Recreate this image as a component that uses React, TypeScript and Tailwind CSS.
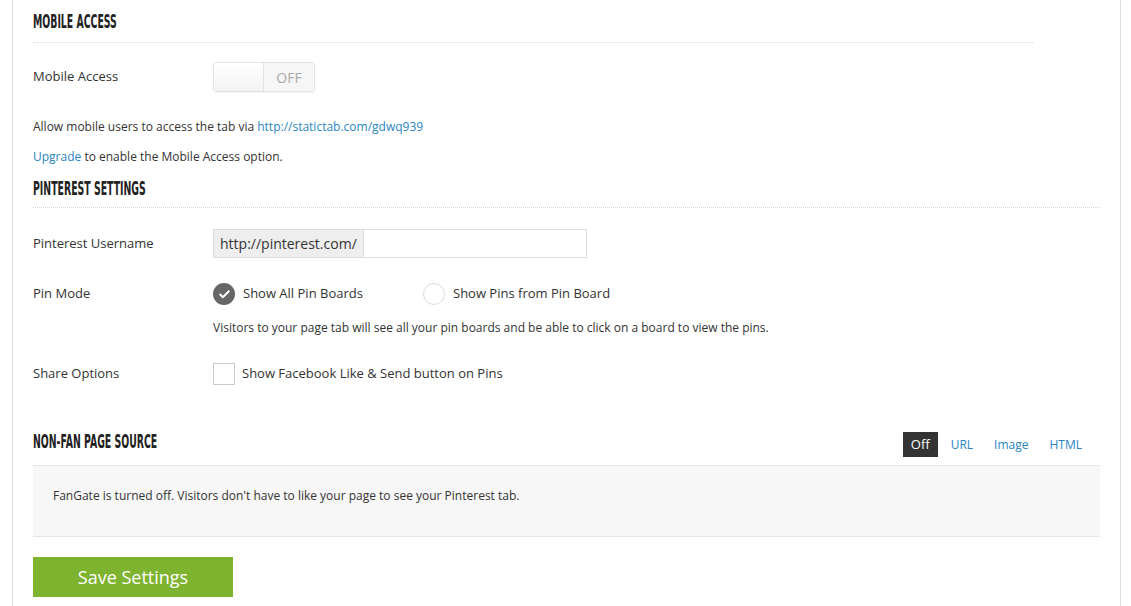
import { Check } from "lucide-react";

const heading =
  "inline-block origin-left scale-x-[0.52] whitespace-nowrap text-[20px] font-bold uppercase leading-[22px] text-[#222]";
const headingFont = {
  fontFamily: '"Liberation Sans Narrow", "DejaVu Sans Condensed", "Liberation Sans", sans-serif',
};

function SectionTitle({ children }: { children: string }) {
  return (
    <h2 className={heading} style={headingFont}>
      {children}
    </h2>
  );
}

function Row({ label, children }: { label: string; children: React.ReactNode }) {
  return (
    <div className="flex items-center">
      <div className="w-[180px] text-[13px] text-[#333]">{label}</div>
      <div className="flex items-center">{children}</div>
    </div>
  );
}

function Radio({ checked, label }: { checked?: boolean; label: string }) {
  return (
    <label className="flex items-center gap-2 text-[13px] text-[#333]">
      {checked ? (
        <span className="flex h-[22px] w-[22px] items-center justify-center rounded-full bg-[#666]">
          <Check className="h-[13px] w-[13px] text-white" strokeWidth={3.5} />
        </span>
      ) : (
        <span className="h-[22px] w-[22px] rounded-full border border-[#ddd] bg-white" />
      )}
      {label}
    </label>
  );
}

export default function App() {
  return (
    <div
      className="min-h-screen bg-white"
      style={{ fontFamily: '"Open Sans", "Liberation Sans", sans-serif' }}
    >
      <div className="ml-3 w-[1109px] min-h-[606px] border-x border-[#ddd] px-5 pb-8">
        {/* Mobile access */}
        <div className="w-[1000px] border-b border-dotted border-[#d6d6d6] pt-[10px] h-[43px]">
          <SectionTitle>Mobile Access</SectionTitle>
        </div>
        <div className="mt-[19px]">
          <Row label="Mobile Access">
            <div className="flex h-[30px] w-[102px] overflow-hidden rounded-[3px] border border-[#e3e3e3] shadow-[0_1px_1px_rgba(0,0,0,0.05)]">
              <div className="w-[50px] border-r border-[#e3e3e3] bg-gradient-to-b from-white to-[#f3f3f3]" />
              <div className="flex flex-1 items-center justify-center bg-[#f6f6f6] text-[14px] text-[#aaa]">
                OFF
              </div>
            </div>
          </Row>
        </div>
        <p className="mt-[26px] text-[12px] leading-[18px] text-[#333]">
          Allow mobile users to access the tab via{" "}
          <a className="text-[#2a86c2]">http://statictab.com/gdwq939</a>
        </p>
        <p className="mt-[12px] text-[12px] leading-[18px] text-[#333]">
          <a className="text-[#2a86c2]">Upgrade</a> to enable the Mobile Access option.
        </p>

        {/* Pinterest settings */}
        <div className="h-[42px] border-b border-dotted border-[#d6d6d6] pt-[11px]">
          <SectionTitle>Pinterest Settings</SectionTitle>
        </div>
        <div className="mt-[21px]">
          <Row label="Pinterest Username">
            <div className="flex h-[29px] w-[374px] border border-[#ddd]">
              <span className="flex items-center border-r border-[#ddd] bg-[#eee] px-[6px] text-[14px] text-[#333]">
                http://pinterest.com/
              </span>
              <input className="flex-1 bg-white px-2 text-[14px] outline-none" />
            </div>
          </Row>
        </div>
        <div className="mt-[25px]">
          <Row label="Pin Mode">
            <div className="flex items-center">
              <div className="w-[210px]">
                <Radio checked label="Show All Pin Boards" />
              </div>
              <Radio label="Show Pins from Pin Board" />
            </div>
          </Row>
        </div>
        <p className="mt-[14px] pl-[180px] text-[12px] leading-[18px] text-[#333]">
          Visitors to your page tab will see all your pin boards and be able to click on a board to view the pins.
        </p>
        <div className="mt-[26px]">
          <Row label="Share Options">
            <label className="flex items-center gap-[7px] text-[13px] text-[#333]">
              <span className="h-[22px] w-[22px] border border-[#ccc] bg-white" />
              Show Facebook Like &amp; Send button on Pins
            </label>
          </Row>
        </div>

        {/* Non-fan page source */}
        <div className="mt-[45px] flex items-start justify-between pr-[18px]">
          <SectionTitle>Non-Fan Page Source</SectionTitle>
          <div className="mt-[2px] flex items-center text-[12px]">
            <span className="flex h-[25px] items-center bg-[#333] px-[8px] text-[13px] text-white">Off</span>
            <a className="ml-[13px] text-[#2a86c2]">URL</a>
            <a className="ml-[21px] text-[#2a86c2]">Image</a>
            <a className="ml-[21px] text-[#2a86c2]">HTML</a>
          </div>
        </div>
        <div className="mt-[8px] h-[72px] border-y border-dotted border-[#d6d6d6] bg-[#f7f7f7] px-5 pt-[21px] text-[12px] leading-[18px] text-[#333]">
          FanGate is turned off. Visitors don&apos;t have to like your page to see your Pinterest tab.
        </div>

        <button className="mt-[20px] flex h-[40px] w-[200px] items-center justify-center bg-[#7db32f] text-[18px] text-white">
          Save Settings
        </button>
      </div>
    </div>
  );
}
